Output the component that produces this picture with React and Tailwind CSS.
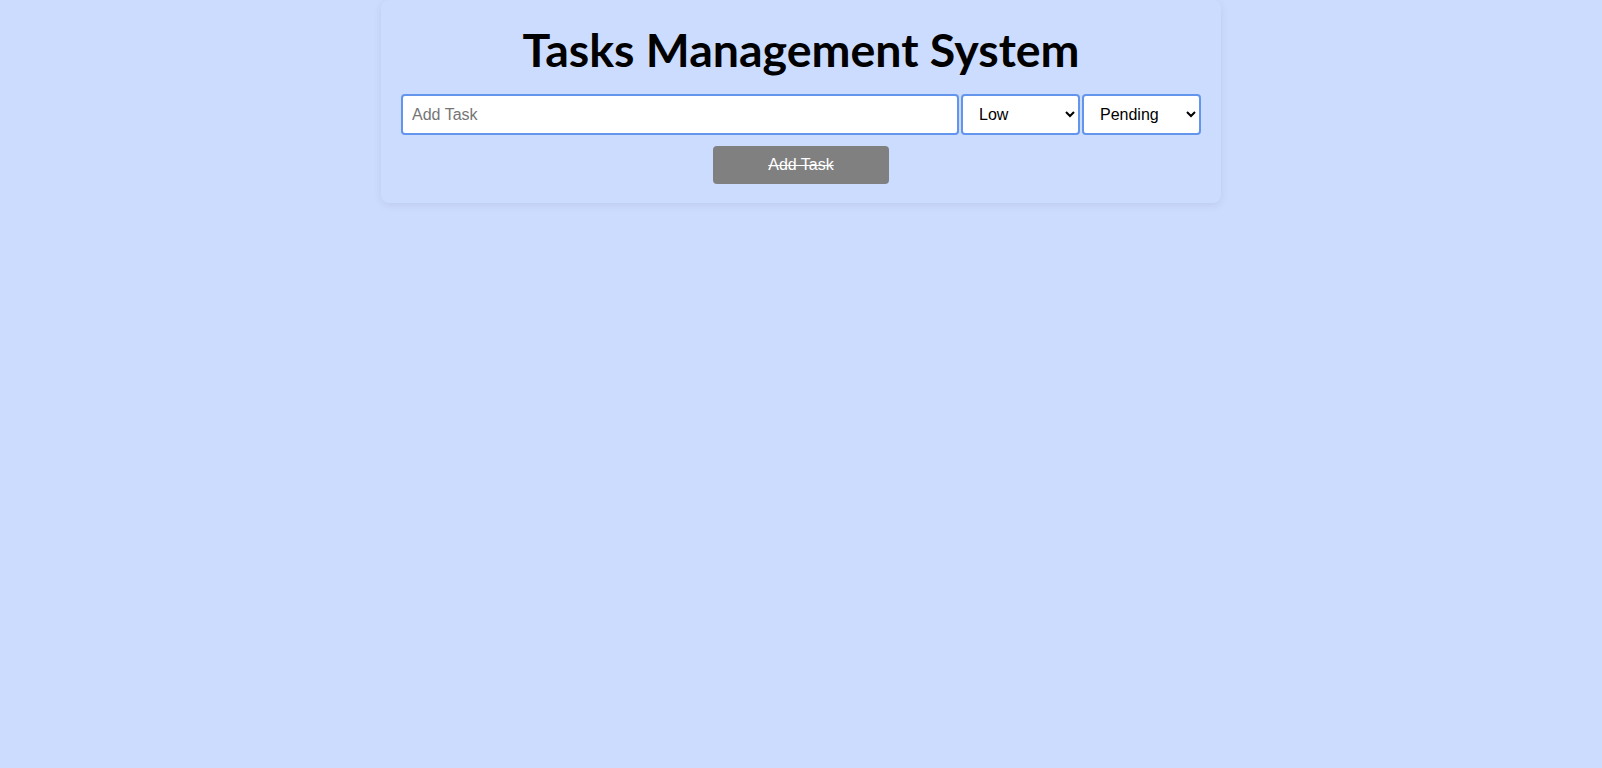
import React from 'react';

export default function App() {
  const [task, setTask] = React.useState('');
  const [priority, setPriority] = React.useState('Low');
  const [status, setStatus] = React.useState('Pending');

  return (
    <div className="min-h-screen bg-[#ccdcff] font-['Liberation_Sans',Arial,sans-serif]">
      {/* Card */}
      <div className="mx-auto w-[840px] rounded-lg bg-[#ccdcfe] px-5 pt-5 pb-[19px] shadow-[0_2px_8px_rgba(0,0,0,0.08)]">
        <h1 className="text-center font-['Lato',sans-serif] text-[46.5px] font-bold leading-[58px] text-black">
          Tasks Management System
        </h1>
        <div className="mt-4 flex gap-[2px]">
          <input
            type="text"
            value={task}
            onChange={e => setTask(e.target.value)}
            placeholder="Add Task"
            className="h-[41px] min-w-0 flex-1 rounded border-2 border-[#6495ed] bg-white px-[9px] text-base text-black placeholder:text-[#757575] outline-none"
          />
          <select
            value={priority}
            onChange={e => setPriority(e.target.value)}
            className="h-[41px] w-[119px] rounded border-2 border-[#6495ed] bg-white pl-[12px] text-base text-black outline-none"
          >
            <option>Low</option>
            <option>Medium</option>
            <option>High</option>
          </select>
          <select
            value={status}
            onChange={e => setStatus(e.target.value)}
            className="h-[41px] w-[119px] rounded border-2 border-[#6495ed] bg-white pl-[12px] text-base text-black outline-none"
          >
            <option>Pending</option>
            <option>In Progress</option>
            <option>Completed</option>
          </select>
        </div>
        <div className="mt-[11px] flex justify-center">
          <button
            disabled
            className="h-[38px] w-[176px] rounded bg-[#808080] text-base text-white line-through"
          >
            Add Task
          </button>
        </div>
      </div>
    </div>
  );
}
